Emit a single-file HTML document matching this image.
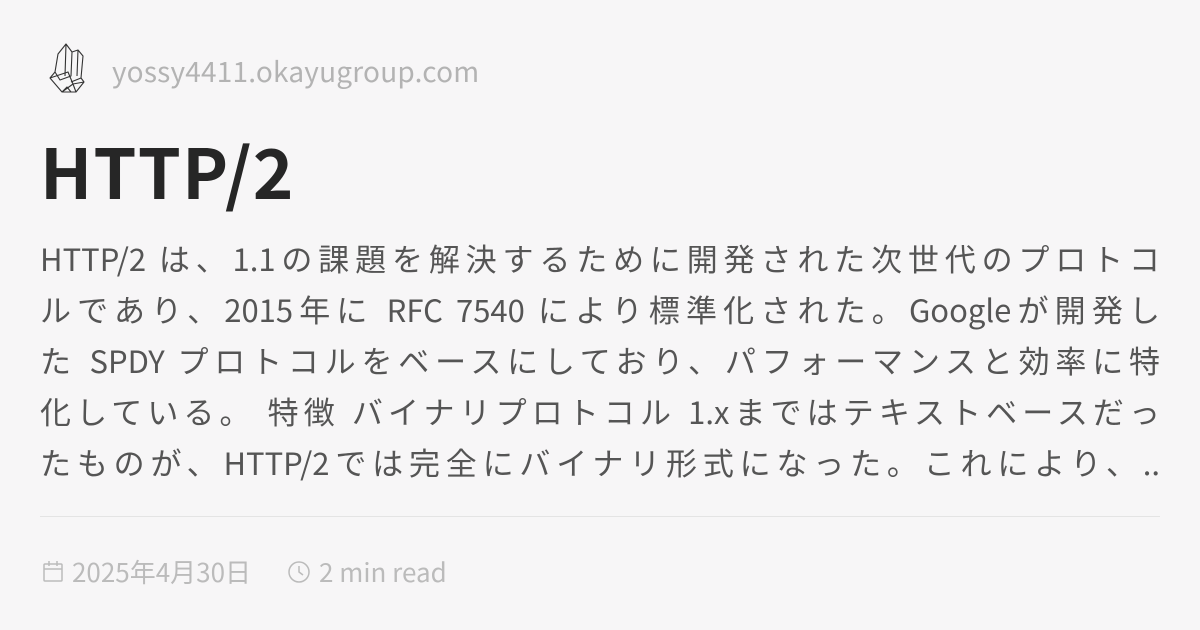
<!DOCTYPE html>
<html><head><meta charset="utf-8"><style>
html,body{margin:0;padding:0}
body{width:1200px;height:630px;background:#f7f6f7;position:relative;overflow:hidden;font-family:"Noto Sans CJK JP","Liberation Sans",sans-serif}
.logo{position:absolute;left:46px;top:42px}
.domain{position:absolute;left:112px;top:53px;font-size:28px;color:#b3b3b3;line-height:36px;letter-spacing:0.2px}
h1{position:absolute;left:40px;top:124px;margin:0;font-size:69px;line-height:90px;font-weight:bold;color:#262626;letter-spacing:1.2px}
.body{position:absolute;left:40px;top:232px;width:1120px;font-size:31px;color:#555;line-height:51px}
.body div{text-align:justify;text-align-last:justify;white-space:nowrap;height:51px;overflow:visible}
hr{position:absolute;left:40px;top:516px;width:1120px;margin:0;border:0;border-top:1px solid #e4e4e4}
.meta{position:absolute;left:42px;top:555px;font-size:26px;color:#bbb;line-height:34px;display:flex;align-items:center}
.meta svg{margin-right:8px}
</style></head><body>
<svg class="logo" width="42" height="54" viewBox="0 0 42 54" fill="none" stroke="#333" stroke-width="1.1" stroke-linejoin="round">
<path d="M12 12 L20 2 L26 10 L25 34 L14 38 L9 30 Z"/>
<path d="M20 2 L19 34"/><path d="M26 10 L32 8 L37 14 L35 36 L25 40"/>
<path d="M32 8 L31 34"/><path d="M9 30 L4 36 L16 50 L30 50 L38 40 L35 36"/>
<path d="M4 36 L22 30 L27 42 L16 50"/><path d="M16 50 L21 45 L25 50 M30 50 L27 42 L38 40"/>
</svg>
<div class="domain">yossy4411.okayugroup.com</div>
<h1>HTTP/2</h1>
<div class="body">
<div>HTTP/2 は、1.1の課題を解決するために開発された次世代のプロトコ</div>
<div>ルであり、2015年に RFC 7540 により標準化された。Googleが開発し</div>
<div>た SPDY プロトコルをベースにしており、パフォーマンスと効率に特</div>
<div>化している。 特徴 バイナリプロトコル 1.xまではテキストベースだっ</div>
<div>たものが、HTTP/2では完全にバイナリ形式になった。これにより、..</div>
</div>
<hr>
<div class="meta">
<svg width="22" height="24" viewBox="0 0 22 24" fill="none" stroke="#bbb" stroke-width="1.5"><rect x="2" y="4" width="18" height="17" rx="1"/><path d="M2 9 H20 M7 1 V6 M15 1 V6"/></svg>
<span>2025年4月30日</span>
<span style="width:36px"></span>
<svg width="24" height="24" viewBox="0 0 24 24" fill="none" stroke="#bbb" stroke-width="1.5"><circle cx="12" cy="12" r="10"/><path d="M12 6 V12 L16 15"/></svg>
<span>2 min read</span>
</div>
</body></html>
